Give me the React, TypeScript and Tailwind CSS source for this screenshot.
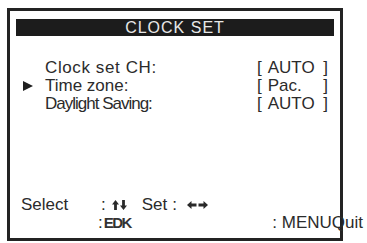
import React from "react";

function UpDown() {
  return (
    <svg width="15" height="10" viewBox="0 0 15 10">
      <path d="M3.5 0 L7 4.5 L4.9 4.5 L4.9 10 L2.1 10 L2.1 4.5 L0 4.5 Z" fill="#2a2a2a" />
      <path d="M11.5 10 L15 5.5 L12.9 5.5 L12.9 0 L10.1 0 L10.1 5.5 L8 5.5 Z" fill="#2a2a2a" />
    </svg>
  );
}

function LeftRight() {
  return (
    <svg width="21" height="8" viewBox="0 0 21 8">
      <path d="M0 4 L4.5 0 L4.5 2.6 L9.5 2.6 L9.5 5.4 L4.5 5.4 L4.5 8 Z" fill="#2a2a2a" />
      <path d="M21 4 L16.5 0 L16.5 2.6 L11.5 2.6 L11.5 5.4 L16.5 5.4 L16.5 8 Z" fill="#2a2a2a" />
    </svg>
  );
}

function Row({ label, value, active, track }: { label: string; value: string; active?: boolean; track: string }) {
  return (
    <div className="flex h-[18px] items-center">
      <div className="flex w-[35px] justify-start pl-[13px]">
        {active && (
          <svg width="10" height="10" viewBox="0 0 10 10">
            <path d="M0 0 L10 5 L0 10 Z" fill="#1f1f1f" />
          </svg>
        )}
      </div>
      <span className={`flex-1 whitespace-nowrap ${track}`}>{label}</span>
      <div className="mr-[12px] flex w-[71px] justify-between">
        <span>[</span>
        <span className="flex-1 pl-[6px]">{value}</span>
        <span>]</span>
      </div>
    </div>
  );
}

export default function App() {
  return (
    <div className="h-[243px] w-[367px] overflow-hidden bg-white text-[17px] leading-[18px] text-[#2b2b2b] [font-family:'Liberation_Sans',Arial,sans-serif]">
      <div className="ml-[7px] mt-[8px] flex h-[233px] w-[336px] flex-col border-[3px] border-[#232323]">
        <div className="mx-[6px] mt-[8px] flex h-[17px] items-center justify-center bg-[#1c1c1c] text-[16px] tracking-[1px] text-[#e8e8e8]">
          CLOCK SET
        </div>

        <div className="mt-[23px] flex flex-col">
          <Row label="Clock set CH:" value="AUTO" track="tracking-[0.6px]" />
          <Row label="Time zone:" value="Pac." active track="tracking-[0px]" />
          <Row label="Daylight Saving:" value="AUTO" track="tracking-[-1px]" />
        </div>

        <div className="mt-auto mb-[6px] flex flex-col">
          <div className="flex h-[19px] items-center pl-[11px]">
            <span className="w-[80px]">Select</span>
            <span>:</span>
            <span className="ml-[6px]">
              <UpDown />
            </span>
            <span className="ml-[15px]">Set</span>
            <span className="ml-[5px]">:</span>
            <span className="ml-[10px]">
              <LeftRight />
            </span>
          </div>
          <div className="flex h-[18px] items-center">
            <div className="ml-[88px] flex items-center">
              <span>:</span>
              <span className="ml-[1px] text-[15px] font-bold tracking-[-1.5px] text-[#333]">EDK</span>
            </div>
            <span className="ml-auto mr-[-23px] whitespace-nowrap">: MENUQuit</span>
          </div>
        </div>
      </div>
    </div>
  );
}
